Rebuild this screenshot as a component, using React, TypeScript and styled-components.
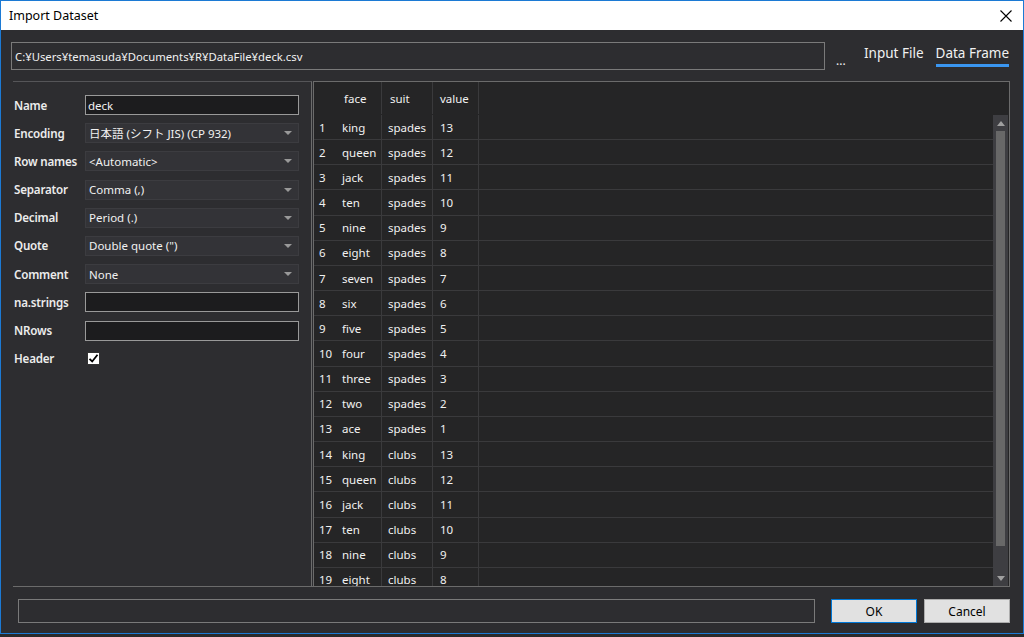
import React from "react";
import styled, { createGlobalStyle } from "styled-components";

const Global = createGlobalStyle`
  html, body { margin: 0; padding: 0; background: #2b2b2b; }
  body { font-family: "Noto Sans", "Noto Sans CJK JP", sans-serif; }
  * { box-sizing: border-box; }
`;

const Window = styled.div`
  width: 1024px;
  height: 634px;
  border: 1px solid #1c7ad4;
  display: flex;
  flex-direction: column;
  background: #2d2d30;
`;

const TitleBar = styled.div`
  flex: none;
  height: 29px;
  background: #ffffff;
  display: flex;
  align-items: center;
  justify-content: space-between;
  padding: 0 11px 0 8px;
  font-size: 12.5px;
  color: #000;
`;

const Body = styled.div`
  flex: 1;
  min-height: 0;
  display: flex;
  flex-direction: column;
  padding: 12px 13px 10px 10px;
  color: #f1f1f1;
  font-size: 11.5px;
`;

const TopRow = styled.div`
  flex: none;
  display: flex;
  align-items: center;
  height: 28px;
`;

const PathBox = styled.div`
  width: 814px;
  flex: none;
  height: 28px;
  border: 1px solid #7a7a7a;
  display: flex;
  align-items: center;
  padding-left: 3px;
  font-size: 11.3px;
  color: #f1f1f1;
`;

const Ellipsis = styled.div`
  margin-left: 11px;
  width: 20px;
  flex: none;
  font-size: 12px;
  padding-top: 8px;
`;

const Tabs = styled.div`
  display: flex;
  gap: 12px;
  margin-left: 8px;
  align-self: flex-start;
  padding-top: 1px;
`;

const Tab = styled.div<{ $active?: boolean }>`
  font-size: 13.5px;
  color: #f1f1f1;
  white-space: nowrap;
  height: 24px;
  border-bottom: 3px solid ${(p) => (p.$active ? "#3a96f0" : "transparent")};
  line-height: 20px;
`;

const Main = styled.div`
  flex: 1;
  min-height: 0;
  margin: 11px 0 0 2px;
  display: flex;
  gap: 1px;
  border-bottom: 1px solid #6b6b6b;
`;

const LeftPanel = styled.div`
  width: 299px;
  flex: none;
  border-top: 1px solid #555558;
  border-right: 1px solid #6b6b6b;
  padding: 13px 12px 0 1px;
  display: flex;
  flex-direction: column;
  gap: 8.2px;
`;

const FormRow = styled.div`
  display: flex;
  align-items: center;
  height: 20px;
`;

const Label = styled.div`
  width: 71px;
  flex: none;
  font-weight: 600;
  font-size: 11.6px;
  letter-spacing: -0.2px;
  color: #ececec;
  white-space: nowrap;
`;

const TextInput = styled.div`
  flex: 1;
  height: 20px;
  background: #1c1c1e;
  border: 1px solid #999999;
  padding-left: 2px;
  display: flex;
  align-items: center;
  font-size: 11.5px;
`;

const Combo = styled.div`
  flex: 1;
  height: 20px;
  background: #333337;
  border: 1px solid #3c3c40;
  padding: 0 6px 0 3px;
  display: flex;
  align-items: center;
  justify-content: space-between;
  font-size: 11.5px;
`;

const Arrow = styled.div`
  width: 0;
  height: 0;
  border-left: 4px solid transparent;
  border-right: 4px solid transparent;
  border-top: 4px solid #999999;
`;

const Check = styled.div`
  width: 13px;
  height: 13px;
  margin-left: 2px;
  background: #ffffff;
  border: 1px solid #333;
  display: flex;
  align-items: center;
  justify-content: center;
`;

const GridFrame = styled.div`
  flex: 1;
  border: 1px solid #6b6b6b;
  border-bottom: none;
  background: #252526;
  display: flex;
  overflow: hidden;
`;

const TableArea = styled.div`
  flex: 1;
  overflow: hidden;
`;

const Row = styled.div<{ $header?: boolean }>`
  display: flex;
  height: ${(p) => (p.$header ? "33px" : "25.17px")};
  border-bottom: 1px solid ${(p) => (p.$header ? "transparent" : "#3a3a3c")};
`;

const Cell = styled.div<{ $w: number; $pad: number; $line?: boolean }>`
  width: ${(p) => p.$w}px;
  flex: none;
  padding-left: ${(p) => p.$pad}px;
  display: flex;
  align-items: center;
  font-size: 11.5px;
  color: #f1f1f1;
  border-right: 1px solid ${(p) => (p.$line ? "#3a3a3c" : "transparent")};
  white-space: nowrap;
`;

const ScrollCol = styled.div`
  width: 15px;
  flex: none;
  padding-top: 33px;
  margin-right: 1px;
  display: flex;
  flex-direction: column;
`;

const ScrollBar = styled.div`
  flex: 1;
  background: #3e3e42;
  display: flex;
  flex-direction: column;
  align-items: center;
`;

const ArrowUp = styled.div`
  width: 0;
  height: 0;
  margin-top: 6px;
  border-left: 4px solid transparent;
  border-right: 4px solid transparent;
  border-bottom: 5px solid #a0a0a0;
`;

const ArrowDown = styled.div`
  width: 0;
  height: 0;
  margin-bottom: 5px;
  border-left: 4px solid transparent;
  border-right: 4px solid transparent;
  border-top: 5px solid #a0a0a0;
`;

const Thumb = styled.div`
  width: 9px;
  height: 415px;
  margin: 5px 0 auto 0;
  background: #686868;
`;

const Footer = styled.div`
  flex: none;
  display: flex;
  align-items: center;
  margin: 12px 0 0 7px;
  height: 24px;
`;

const StatusBox = styled.div`
  width: 797px;
  height: 24px;
  border: 1px solid #7a7a7a;
`;

const Button = styled.div<{ $default?: boolean }>`
  width: 86px;
  height: 24px;
  margin-left: ${(p) => (p.$default ? "16px" : "7px")};
  background: #e1e1e1;
  border: 1px solid ${(p) => (p.$default ? "#0078d7" : "#adadad")};
  color: #000;
  font-size: 12px;
  display: flex;
  align-items: center;
  justify-content: center;
`;

const fields: { label: string; kind: "text" | "combo" | "check"; value?: string }[] = [
  { label: "Name", kind: "text", value: "deck" },
  { label: "Encoding", kind: "combo", value: "日本語 (シフト JIS) (CP 932)" },
  { label: "Row names", kind: "combo", value: "<Automatic>" },
  { label: "Separator", kind: "combo", value: "Comma (,)" },
  { label: "Decimal", kind: "combo", value: "Period (.)" },
  { label: "Quote", kind: "combo", value: 'Double quote (")' },
  { label: "Comment", kind: "combo", value: "None" },
  { label: "na.strings", kind: "text", value: "" },
  { label: "NRows", kind: "text", value: "" },
  { label: "Header", kind: "check" },
];

const faces = ["king", "queen", "jack", "ten", "nine", "eight", "seven", "six", "five", "four", "three", "two", "ace"];
const rows: [string, string, string][] = [];
faces.forEach((f, i) => rows.push([f, "spades", String(13 - i)]));
faces.slice(0, 6).forEach((f, i) => rows.push([f, "clubs", String(13 - i)]));

const cols = [
  { w: 23, pad: 5 },
  { w: 45, pad: 5 },
  { w: 51, pad: 6 },
  { w: 46, pad: 7 },
];

export default function App() {
  return (
    <>
      <Global />
      <Window>
        <TitleBar>
          <span>Import Dataset</span>
          <svg width="12" height="12" viewBox="0 0 12 12">
            <path d="M0.5 0.5 L11.5 11.5 M11.5 0.5 L0.5 11.5" stroke="#000" strokeWidth="1.1" />
          </svg>
        </TitleBar>
        <Body>
          <TopRow>
            <PathBox>C:¥Users¥temasuda¥Documents¥R¥DataFile¥deck.csv</PathBox>
            <Ellipsis>...</Ellipsis>
            <Tabs>
              <Tab>Input File</Tab>
              <Tab $active>Data Frame</Tab>
            </Tabs>
          </TopRow>
          <Main>
            <LeftPanel>
              {fields.map((f) => (
                <FormRow key={f.label}>
                  <Label>{f.label}</Label>
                  {f.kind === "text" && <TextInput>{f.value}</TextInput>}
                  {f.kind === "combo" && (
                    <Combo>
                      <span>{f.value}</span>
                      <Arrow />
                    </Combo>
                  )}
                  {f.kind === "check" && (
                    <Check>
                      <svg width="11" height="11" viewBox="0 0 11 11">
                        <path d="M1.5 5.8 L4.2 8.5 L9.5 1.8" stroke="#000" strokeWidth="1.8" fill="none" />
                      </svg>
                    </Check>
                  )}
                </FormRow>
              ))}
            </LeftPanel>
            <GridFrame>
              <TableArea>
                <Row $header>
                  <Cell $w={cols[0].w} $pad={cols[0].pad} />
                  <Cell $w={cols[1].w} $pad={cols[1].pad + 2} $line>face</Cell>
                  <Cell $w={cols[2].w} $pad={cols[2].pad + 2} $line>suit</Cell>
                  <Cell $w={cols[3].w} $pad={cols[3].pad} $line>value</Cell>
                </Row>
                {rows.map((r, i) => (
                  <Row key={i}>
                    <Cell $w={cols[0].w} $pad={cols[0].pad}>{i + 1}</Cell>
                    <Cell $w={cols[1].w} $pad={cols[1].pad} $line>{r[0]}</Cell>
                    <Cell $w={cols[2].w} $pad={cols[2].pad} $line>{r[1]}</Cell>
                    <Cell $w={cols[3].w} $pad={cols[3].pad} $line>{r[2]}</Cell>
                  </Row>
                ))}
              </TableArea>
              <ScrollCol>
                <ScrollBar>
                  <ArrowUp />
                  <Thumb />
                  <ArrowDown />
                </ScrollBar>
              </ScrollCol>
            </GridFrame>
          </Main>
          <Footer>
            <StatusBox />
            <Button $default>OK</Button>
            <Button>Cancel</Button>
          </Footer>
        </Body>
      </Window>
    </>
  );
}
